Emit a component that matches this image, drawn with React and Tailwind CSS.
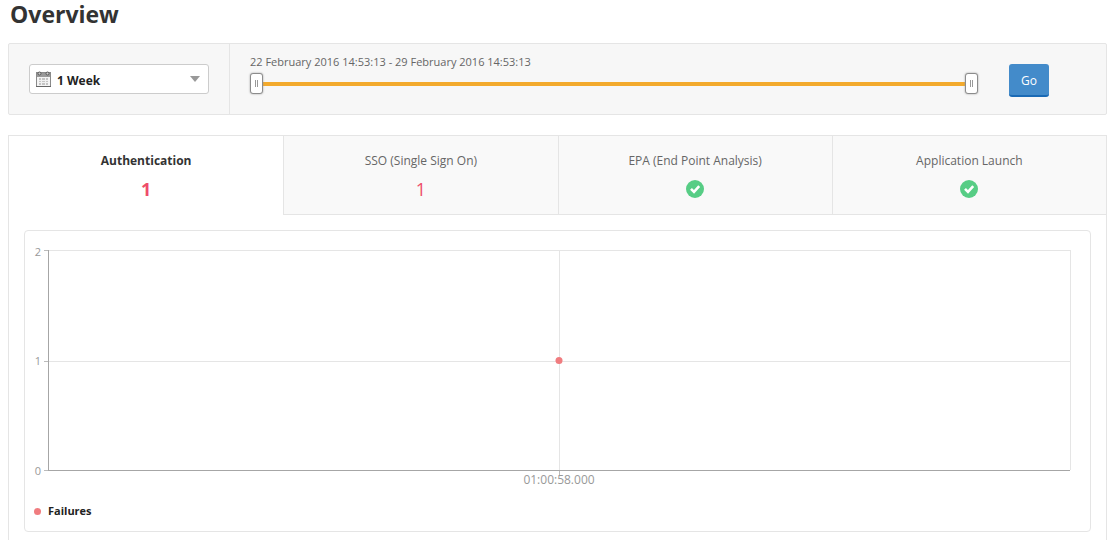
import React, { useState } from 'react';
import clsx from 'clsx';

const TABS = [
    { id: 'auth', label: 'Authentication', failures: 1 },
    { id: 'sso', label: 'SSO (Single Sign On)', failures: 1 },
    { id: 'epa', label: 'EPA (End Point Analysis)', failures: 0 },
    { id: 'launch', label: 'Application Launch', failures: 0 },
];

const PLOT_HEIGHT = 220;

const CalendarIcon = () => (
    <svg width="15" height="17" viewBox="0 0 15 17" aria-hidden="true" shapeRendering="crispEdges">
        <rect x="0" y="1" width="15" height="15" fill="#8a8a8a" />
        <rect x="1" y="6" width="13" height="9" fill="#f4f4f4" />
        <rect x="1" y="2" width="13" height="4" fill="#999" />
        <rect x="0" y="15" width="15" height="1" fill="#666" />
        <rect x="3" y="7" width="9" height="7" fill="#c4c4c4" />
        <path d="M3 9.5h9M3 11.5h9M5.5 7v7M9.5 7v7" stroke="#f0f0f0" />
        <g shapeRendering="auto" fill="#ccc" stroke="#555">
            <circle cx="3.5" cy="2.5" r="1.5" />
            <circle cx="11.5" cy="2.5" r="1.5" />
        </g>
    </svg>
);

const CheckIcon = () => (
    <svg width="18" height="18" viewBox="0 0 18 18" role="img" aria-label="No failures">
        <circle cx="9" cy="9" r="9" fill="#57cd85" />
        <path d="M5 8.8l3 3 5.2-5.6" fill="none" stroke="#fff" strokeWidth="2.6" />
    </svg>
);

const RangeThumb = ({ label, value, onChange }) => (
    <input
        type="range"
        min="0"
        max="100"
        aria-label={label}
        value={value}
        onChange={(e) => onChange(Number(e.target.value))}
        className="col-start-1 row-start-1 w-full h-[21px] m-0 appearance-none bg-transparent pointer-events-none [&::-webkit-slider-thumb]:appearance-none [&::-webkit-slider-thumb]:pointer-events-auto [&::-webkit-slider-thumb]:w-[13px] [&::-webkit-slider-thumb]:h-[21px] [&::-webkit-slider-thumb]:rounded-[3px] [&::-webkit-slider-thumb]:border [&::-webkit-slider-thumb]:border-solid [&::-webkit-slider-thumb]:border-[#8c8c8c] [&::-webkit-slider-thumb]:shadow-[0_0_2px_#999] [&::-webkit-slider-thumb]:bg-white [&::-webkit-slider-thumb]:bg-[linear-gradient(90deg,#999_1px,transparent_1px,transparent_2px,#999_2px)] [&::-webkit-slider-thumb]:bg-[length:3px_7px] [&::-webkit-slider-thumb]:bg-center [&::-webkit-slider-thumb]:bg-no-repeat"
    />
);

const FilterBar = () => {
    const [period, setPeriod] = useState('week');
    const [start, setStart] = useState(0);
    const [end, setEnd] = useState(100);

    return (
        <div className="flex h-18 bg-[#f7f7f7] border border-[#e5e5e5] rounded-xs">
            <div className="flex items-center px-5 border-r border-[#e5e5e5]">
                <div className="grid items-center w-[180px]">
                    <select
                        aria-label="Time period"
                        value={period}
                        onChange={(e) => setPeriod(e.target.value)}
                        className="col-start-1 row-start-1 w-full h-[30px] appearance-none bg-white border border-[#ccc] rounded-[3px] pt-1 pl-[27px] pr-6 text-xs font-bold text-[#222]"
                    >
                        <option value="day">1 Day</option>
                        <option value="week">1 Week</option>
                        <option value="month">1 Month</option>
                    </select>
                    <div className="col-start-1 row-start-1 flex items-center justify-between pl-[7px] pr-[9px] pointer-events-none">
                        <CalendarIcon />
                        <svg width="10" height="6" viewBox="0 0 10 6" aria-hidden="true">
                            <path d="M0 0h10L5 6z" fill="#999" />
                        </svg>
                    </div>
                </div>
            </div>

            <div className="flex-1 pl-5 pt-2.5">
                <div className="text-[11px] leading-4 text-[#666]">22 February 2016 14:53:13 - 29 February 2016 14:53:13</div>
                <div className="grid items-center mt-[3px]">
                    <div className="col-start-1 row-start-1 h-1 mx-1.5 bg-[#f3aa2d]" />
                    <RangeThumb label="Start of range" value={start} onChange={setStart} />
                    <RangeThumb label="End of range" value={end} onChange={setEnd} />
                </div>
            </div>

            <div className="pl-[31px] pr-[57px] pt-5">
                <button
                    type="button"
                    className="block w-10 h-[33px] rounded-[3px] bg-[#438bca] border-b-2 border-[#1a6ab5] pt-0.5 text-xs text-white"
                >
                    Go
                </button>
            </div>
        </div>
    );
};

const FailureChart = () => (
    <div className="mx-[15px] mt-[15px] pt-[19px] pl-[23px] pr-5 pb-3 border border-[#e5e5e5] rounded-[4px]">
        <svg width="100%" height={PLOT_HEIGHT} className="block overflow-visible" role="img" aria-label="Failures over time">
            <g shapeRendering="crispEdges">
                <g stroke="#e5e5e5">
                    <line x1="0" y1="0.5" x2="100%" y2="0.5" />
                    <line x1="0" y1="111.5" x2="100%" y2="111.5" />
                    <line x1="50%" y1="0" x2="50%" y2={PLOT_HEIGHT} />
                    <line x1="100%" y1="0" x2="100%" y2={PLOT_HEIGHT} />
                </g>
                <g stroke="#bbb">
                    <line x1="-4" y1="0.5" x2="0" y2="0.5" />
                    <line x1="-4" y1="111.5" x2="0" y2="111.5" />
                    <line x1="-4" y1="220.5" x2="0" y2="220.5" />
                    <line x1="50%" y1="221" x2="50%" y2="225" />
                </g>
                <g stroke="#a6a6a6">
                    <line x1="0.5" y1="0" x2="0.5" y2="221" />
                    <line x1="0" y1="220.5" x2="100%" y2="220.5" />
                </g>
            </g>
            <g fill="#999">
                <g fontSize="11" textAnchor="end">
                    <text x="-7" y="6">2</text>
                    <text x="-7" y="115">1</text>
                    <text x="-7" y="225">0</text>
                </g>
                <text x="50%" y="234" fontSize="12" textAnchor="middle">01:00:58.000</text>
            </g>
            <circle cx="50%" cy="110.5" r="3.5" fill="#f07c7f" />
        </svg>
        <div className="flex items-center gap-[7px] -ml-3.5 mt-[33px] text-[11px] leading-4 font-bold text-[#222]">
            <span className="w-[7px] h-[7px] rounded-full bg-[#f07c7f]" />
            Failures
        </div>
    </div>
);

const App = () => {
    const [activeTab, setActiveTab] = useState('auth');

    return (
        <main className="px-2 bg-white font-['Open_Sans','Noto_Sans',sans-serif]">
            <h1 className="h-[43px] pl-0.5 text-[23px] leading-7 font-bold text-[#333]">Overview</h1>

            <FilterBar />

            <section className="mt-5 h-[420px] border border-[#e5e5e5] overflow-hidden">
                <div role="tablist" className="grid grid-cols-4">
                    {TABS.map((tab, i) => {
                        const active = tab.id === activeTab;
                        return (
                            <button
                                key={tab.id}
                                type="button"
                                role="tab"
                                aria-selected={active}
                                onClick={() => setActiveTab(tab.id)}
                                className={clsx(
                                    'flex flex-col items-center h-[79px] pt-[17px] gap-2.5 border-b text-xs border-[#e5e5e5]',
                                    i > 0 && 'border-l',
                                    active ? 'bg-white border-b-white font-bold text-[#333]' : 'bg-[#f9f9f9] text-[#666]'
                                )}
                            >
                                <span>{tab.label}</span>
                                <span className="flex items-center h-5 text-lg text-[#ee4d6a]">
                                    {tab.failures > 0 ? tab.failures : <CheckIcon />}
                                </span>
                            </button>
                        );
                    })}
                </div>

                <FailureChart />
            </section>
        </main>
    );
};

export default App;
